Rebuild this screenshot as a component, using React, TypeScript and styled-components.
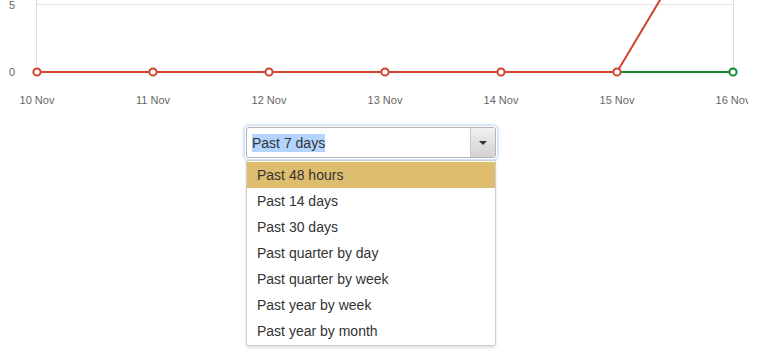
import React from "react";
import styled, { createGlobalStyle } from "styled-components";

const GlobalStyle = createGlobalStyle`
  body {
    margin: 0;
    background: #fff;
    font-family: "Liberation Sans", Arial, sans-serif;
    overflow: hidden;
  }
`;

const RED = "#d2432f";
const GREEN = "#178a2b";

const labels = ["10 Nov", "11 Nov", "12 Nov", "13 Nov", "14 Nov", "15 Nov", "16 Nov"];
const ranges = [
  "Past 48 hours",
  "Past 14 days",
  "Past 30 days",
  "Past quarter by day",
  "Past quarter by week",
  "Past year by week",
  "Past year by month",
];

function Chart() {
  const xs = labels.map((_, i) => 37 + i * 116);
  const y0 = 72;
  return (
    <ChartSvg width={748} height={112} viewBox="0 0 748 112">
      <line x1={37} y1={4.5} x2={733} y2={4.5} stroke="#e3e3e3" strokeWidth={1} />
      <line x1={36.5} y1={0} x2={36.5} y2={y0} stroke="#dcdcdc" strokeWidth={1} />
      <line x1={733.5} y1={0} x2={733.5} y2={y0} stroke="#dcdcdc" strokeWidth={1} />
      <AxisText x={15} y={9} textAnchor="end">5</AxisText>
      <AxisText x={15} y={76} textAnchor="end">0</AxisText>
      <line x1={xs[0]} y1={y0} x2={xs[5]} y2={y0} stroke={RED} strokeWidth={2} />
      <line x1={xs[5]} y1={y0} x2={663} y2={-5} stroke={RED} strokeWidth={2} />
      <line x1={xs[5]} y1={y0} x2={xs[6]} y2={y0} stroke={GREEN} strokeWidth={2} />
      {xs.map((x, i) => (
        <circle
          key={i}
          cx={x}
          cy={y0}
          r={3.6}
          fill="#fff"
          stroke={i === 6 ? GREEN : RED}
          strokeWidth={2}
        />
      ))}
      {xs.map((x, i) => (
        <AxisText key={i} x={x} y={104} textAnchor="middle">
          {labels[i]}
        </AxisText>
      ))}
    </ChartSvg>
  );
}

export default function App() {
  return (
    <>
      <GlobalStyle />
      <Page>
        <Chart />
        <PickerArea>
          <Picker>
            <SelectBox>
              <Current>
                <Selected>Past 7 days</Selected>
              </Current>
              <ArrowButton>
                <Caret />
              </ArrowButton>
            </SelectBox>
            <Options>
              {ranges.map((r, i) => (
                <Option key={r} active={i === 0}>
                  {r}
                </Option>
              ))}
            </Options>
          </Picker>
        </PickerArea>
      </Page>
    </>
  );
}

const Page = styled.div`
  width: 758px;
  height: 350px;
  display: flex;
  flex-direction: column;
`;

const ChartSvg = styled.svg`
  display: block;
  flex-shrink: 0;
  overflow: hidden;
`;

const AxisText = styled.text`
  font-family: "Liberation Sans", Arial, sans-serif;
  font-size: 11px;
  fill: #666;
`;

const PickerArea = styled.div`
  display: flex;
  padding-top: 15px;
  padding-left: 246px;
`;

const Picker = styled.div`
  width: 250px;
  display: flex;
  flex-direction: column;
`;

const SelectBox = styled.div`
  height: 31px;
  box-sizing: border-box;
  border: 1px solid #b4b4b4;
  border-radius: 3px;
  display: flex;
  background: #fff;
  box-shadow: 0 0 0 1px #fff, 0 0 2px 3px rgba(160, 190, 235, 0.45);
  overflow: hidden;
`;

const Current = styled.div`
  flex: 1;
  display: flex;
  align-items: center;
  padding-left: 5px;
  font-size: 14px;
  color: #333;
`;

const Selected = styled.span`
  background: #b3d5fd;
  line-height: 18px;
`;

const ArrowButton = styled.div`
  width: 24px;
  display: flex;
  align-items: center;
  justify-content: center;
  border-left: 1px solid #c8c8c8;
  background: linear-gradient(#f0f0f0, #d2d2d2);
`;

const Caret = styled.div`
  width: 0;
  height: 0;
  border-left: 4px solid transparent;
  border-right: 4px solid transparent;
  border-top: 4px solid #333;
`;

const Options = styled.div`
  margin-top: 2px;
  box-sizing: border-box;
  border: 1px solid #cdcdcd;
  border-radius: 0 0 3px 3px;
  padding: 1px 0;
  box-shadow: 0 2px 3px rgba(0, 0, 0, 0.12);
  background: #fff;
`;

const Option = styled.div<{ active?: boolean }>`
  height: 26px;
  line-height: 26px;
  padding-left: 10px;
  font-size: 14px;
  color: #333;
  background: ${(p) => (p.active ? "#dfbd6f" : "transparent")};
`;
